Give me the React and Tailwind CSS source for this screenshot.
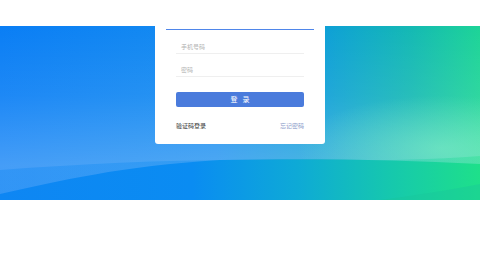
import React from "react";

function Banner() {
  return (
    <svg className="absolute inset-0 w-full h-full" viewBox="0 0 480 174" preserveAspectRatio="none">
      <defs>
        <linearGradient id="base" x1="0" y1="0" x2="1" y2="0">
          <stop offset="0" stopColor="#0a7ef5" />
          <stop offset="0.45" stopColor="#158cf0" />
          <stop offset="0.68" stopColor="#0ea0d6" />
          <stop offset="0.85" stopColor="#14b8b5" />
          <stop offset="1" stopColor="#1dd497" />
        </linearGradient>
        <linearGradient id="vert" x1="0" y1="0" x2="0" y2="1">
          <stop offset="0" stopColor="#ffffff" stopOpacity="0" />
          <stop offset="0.4" stopColor="#ffffff" stopOpacity="0.08" />
          <stop offset="0.7" stopColor="#ffffff" stopOpacity="0.2" />
          <stop offset="0.8" stopColor="#ffffff" stopOpacity="0.24" />
        </linearGradient>
        <linearGradient id="low" x1="0" y1="0" x2="1" y2="0">
          <stop offset="0" stopColor="#0e86f3" />
          <stop offset="0.4" stopColor="#0a8cf2" />
          <stop offset="0.62" stopColor="#0eaad6" />
          <stop offset="0.82" stopColor="#16c9ac" />
          <stop offset="1" stopColor="#1ee08a" />
        </linearGradient>
        <radialGradient id="glow" cx="0.92" cy="0.7" r="0.3">
          <stop offset="0" stopColor="#8af2c8" stopOpacity="0.5" />
          <stop offset="1" stopColor="#8af2c8" stopOpacity="0" />
        </radialGradient>
      </defs>
      <rect x="0" y="0" width="480" height="174" fill="url(#base)" />
      <rect x="0" y="0" width="480" height="174" fill="url(#vert)" />
      <rect x="0" y="0" width="480" height="174" fill="url(#glow)" />
      <path d="M0 144 C80 138 160 134 240 134 C330 134 400 136 480 130 L480 174 L0 174 Z" fill="url(#low)" opacity="0.35" />
      <path d="M0 168 C60 155 120 140 220 134 C320 132 400 134 480 138 L480 174 L0 174 Z" fill="url(#low)" />
      <path d="M380 174 C410 170 450 164 480 158 L480 174 Z" fill="#18c69c" opacity="0.4" />
    </svg>
  );
}

export default function App() {
  return (
    <div className="relative w-[480px] h-[270px] bg-white overflow-hidden" style={{ fontFamily: '"Noto Sans CJK SC", "Noto Sans", sans-serif' }}>
      <div className="flex flex-col">
        <div className="h-[26px] bg-white" />
        <div className="relative h-[174px]">
          <Banner />
        </div>
        <div className="h-[70px] bg-white" />
      </div>
      <div className="absolute left-[155px] top-0 w-[170px] h-[144px] bg-white rounded-b-[3px] flex flex-col px-[21px]">
        <div className="mt-[29px] -mx-[10px] border-t border-[#4f86ea]" />
        <div className="mt-[11px] h-[13px] flex items-center pl-[5px] text-[6px] leading-none text-[#b4b4b4] border-b border-[#efefef]" lang="zh-CN">手机号码</div>
        <div className="mt-[10px] h-[13px] flex items-center pl-[5px] text-[6px] leading-none text-[#b4b4b4] border-b border-[#efefef]" lang="zh-CN">密码</div>
        <div className="mt-[15px] h-[15px] bg-[#4a7bdc] rounded-[2px] flex items-center justify-center text-white text-[7px] leading-none tracking-[5px] pl-[5px]" lang="zh-CN">登录</div>
        <div className="mt-[16px] flex justify-between items-center text-[6px] leading-none" lang="zh-CN">
          <span className="text-[#333333]">验证码登录</span>
          <span className="text-[#8a9bc9]">忘记密码</span>
        </div>
      </div>
    </div>
  );
}
